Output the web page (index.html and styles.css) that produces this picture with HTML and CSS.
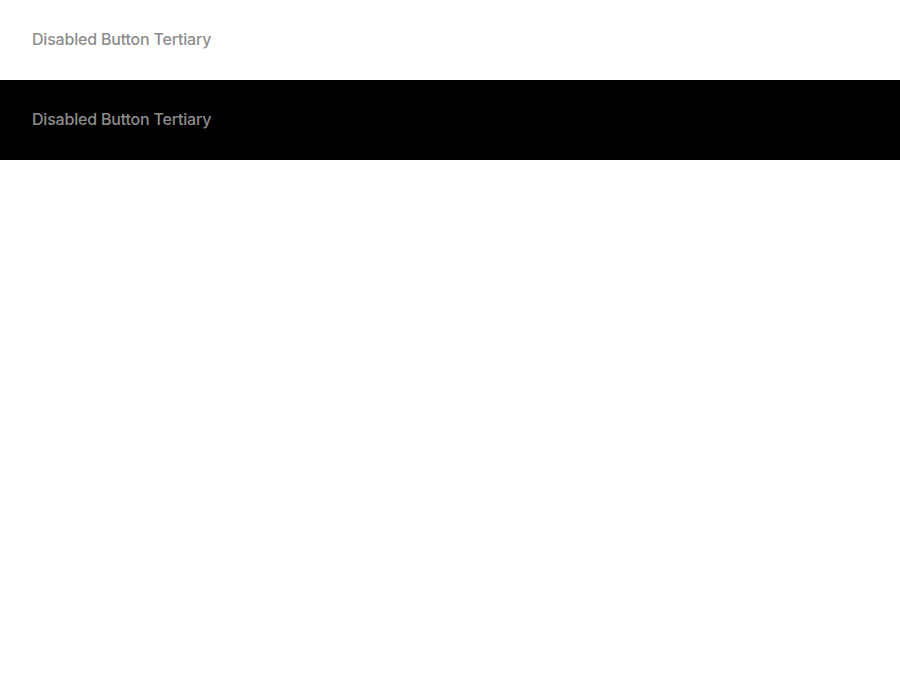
FILE: index.html
```html
<!DOCTYPE html>
<html lang="en">
<head>
  <meta charset="UTF-8" />
  <title>Disabled Button Tertiary</title>
  <link rel="stylesheet" href="styles.css">
</head>
<body>

  <div class="row">
    <button class="btn-tertiary" disabled>Disabled Button Tertiary</button>
  </div>

  <div class="row dark">
    <button class="btn-tertiary" disabled>Disabled Button Tertiary</button>
  </div>

</body>
</html>
```

FILE: styles.css
```css
body {
  font-family: Inter, 'Noto Sans', sans-serif;
  background: #fff;
  margin: 0;
}

.row {
  display: flex;
  align-items: center;
  height: 80px;
  padding: 0 16px;
}

.row.dark {
  background: #000;
}

.btn-tertiary {
  font-family: inherit;
  font-size: 16px;
  font-weight: 500;
  letter-spacing: -0.2px;
  color: #8d8d8d;
  background: none;
  border: none;
  padding: 13px 16px 15px;
  cursor: not-allowed;
}
```
